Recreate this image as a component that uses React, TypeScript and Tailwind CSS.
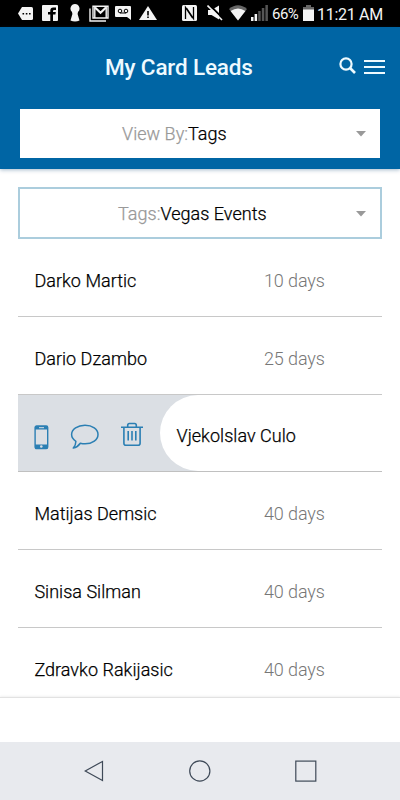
import type { ReactNode } from "react";

type IconProps = { w: number; h: number; className?: string; children: ReactNode };

function Icon({ w, h, className = "", children }: IconProps) {
  return (
    <svg width={w} height={h} viewBox={`0 0 ${w} ${h}`} className={`shrink-0 ${className}`} fill="none">
      {children}
    </svg>
  );
}

function StatusBar() {
  return (
    <div className="flex h-[27px] items-start bg-black pl-[18px] text-[#f4f4f4]">
      <Icon w={15} h={13} className="mt-[7px]">
        <path d="M4 0h9.5Q15 0 15 1.5v10Q15 13 13.5 13H4L0 6.5z" fill="currentColor" />
        <path d="M4.5 6h1.6v1.6H4.5zM7.8 6h1.6v1.6H7.8zM11 6h1.6v1.6H11z" fill="#000" />
      </Icon>
      <Icon w={16} h={16} className="mt-[5px] ml-[9px]">
        <rect width="16" height="16" rx="1" fill="currentColor" />
        <path d="M8.3 16V9.6H6V7h2.3V5.4Q8.3 2.5 11.3 2.5H14V5h-1.8Q11 5 11 6v1h2.8l-.4 2.6H11V16z" fill="#000" />
      </Icon>
      <Icon w={10} h={18} className="mt-[4px] ml-[12px]">
        <path d="M5 0a4.6 4.6 0 0 1 3 8L7.6 10 9.5 16.5Q5 18.5.5 16.5L2.4 10 2 8A4.6 4.6 0 0 1 5 0z" fill="currentColor" />
      </Icon>
      <Icon w={20} h={17} className="mt-[5px] ml-[9px]">
        <path d="M1 3.5V16h16" stroke="currentColor" strokeWidth="1.4" />
        <path d="M4 13V1.2h15V13z" stroke="currentColor" strokeWidth="1.4" />
        <path d="M6 2.5l5.5 5.2L17 2.5" stroke="currentColor" strokeWidth="2.2" />
        <path d="M5.8 2v11M17.2 2v11" stroke="currentColor" strokeWidth="1.4" />
      </Icon>
      <Icon w={16} h={14} className="mt-[6px] ml-[6px]">
        <path d="M1 0h14q1 0 1 1v13l-4-3H1q-1 0-1-1V1q0-1 1-1z" fill="currentColor" />
        <circle cx="5" cy="5" r="1.8" stroke="#000" />
        <circle cx="11" cy="5" r="1.8" stroke="#000" />
        <path d="M5 7h6" stroke="#000" />
      </Icon>
      <Icon w={18} h={14} className="mt-[6px] ml-[8px]">
        <path d="M9 0l9 14H0z" fill="currentColor" />
        <path d="M8.2 5h1.6v4.5H8.2zM8.2 10.5h1.6v1.6H8.2z" fill="#000" />
      </Icon>
      <Icon w={15} h={16} className="mt-[5px] ml-[25px]">
        <rect width="15" height="16" rx="1.5" fill="currentColor" />
        <path d="M3.5 14V2.5l7 10.5M11.5 2v11.5L4.5 3" stroke="#000" strokeWidth="1.3" />
      </Icon>
      <Icon w={16} h={16} className="mt-[5px] ml-[10px]">
        <path d="M1 5h3.5L12 .5v14L4.5 10H1z" fill="currentColor" />
        <path d="M2.5 0l14 14" stroke="#000" strokeWidth="2" />
        <path d="M.5 .5l14.5 14.5" stroke="currentColor" strokeWidth="1.6" />
      </Icon>
      <Icon w={18} h={16} className="mt-[5px] ml-[6px]">
        <path d="M0 4Q9-3.5 18 4L9 15.5z" fill="#666" />
        <path d="M1.6 6Q9 .8 16.4 6L9 15.5z" fill="currentColor" />
      </Icon>
      <Icon w={17} h={16} className="mt-[5px] ml-[4px]">
        <path d="M0 12h2.5v4H0zM3.6 9h2.5v7H3.6z" fill="currentColor" />
        <path d="M7.2 6h2.5v10H7.2zM10.8 3h2.5v13h-2.5zM14.4 0h2.5v16h-2.5z" fill="#555" />
      </Icon>
      <span className="mt-[4px] ml-[4px] w-[31px] text-[15px] leading-[20px] tracking-[-0.5px]">66%</span>
      <Icon w={11} h={16} className="mt-[5px]">
        <path d="M3 0h5v2h3v4H0V2h3z" fill="#666" />
        <path d="M0 4.5h11V16H0z" fill="currentColor" />
      </Icon>
      <span className="mt-[5px] ml-[3px] whitespace-nowrap text-[16px] leading-[20px] tracking-[-0.3px]">11:21 AM</span>
    </div>
  );
}

function Caret() {
  return (
    <Icon w={10} h={6} className="text-[#999]">
      <path d="M0 0h10L5 5.5z" fill="currentColor" />
    </Icon>
  );
}

function Select({ label, value, className }: { label: string; value: string; className: string }) {
  return (
    <div className={`flex items-center bg-white text-[18px] leading-6 font-light tracking-[0.03px] [-webkit-text-stroke:0.25px] ${className}`}>
      <div className="flex-1 whitespace-nowrap">
        <span className="text-[#999]">{label}</span>
        <span className="text-black">{value}</span>
      </div>
      <Caret />
    </div>
  );
}

function Header() {
  return (
    <header className="h-[142px] bg-[#0065a4] px-5 shadow-[0_1px_4px_rgba(0,60,110,0.35)]">
      <div className="flex h-[82px] items-center text-[#eefaff]">
        <h1 className="-mt-[3px] ml-[85px] w-[234px] shrink-0 text-[22.5px] leading-7 font-medium tracking-[-0.15px] whitespace-nowrap">My Card Leads</h1>
        <Icon w={17} h={17} className="-mt-[5px]">
          <circle cx="7" cy="7" r="5.6" stroke="currentColor" strokeWidth="2.2" />
          <path d="M11 11l5 5" stroke="currentColor" strokeWidth="2.6" />
        </Icon>
        <Icon w={21} h={14} className="-mt-[2px] ml-[8px]">
          <path d="M0 1h21M0 7h21M0 13h21" stroke="currentColor" strokeWidth="2" />
        </Icon>
      </div>
      <Select label="View By:" value="Tags" className="h-[49px] pr-[14px] pl-[102px]" />
    </header>
  );
}

function Lead({ name, days }: { name: string; days: string }) {
  return (
    <li className="flex h-[77.8px] items-center border-b border-[#c8c8c8] pt-[7px] pl-[16.4px] text-[18px] leading-6 font-light">
      <span className="w-[229.6px] tracking-[0.03px] text-black [-webkit-text-stroke:0.25px]">{name}</span>
      <span className="tracking-[-0.1px] text-[#777]">{days}</span>
    </li>
  );
}

function SwipedLead({ name }: { name: string }) {
  return (
    <li className="flex h-[77.8px] border-b border-[#c0c0c0] bg-[#dbdfe4] text-[#2b7fb3]">
      <div className="flex w-[142px] shrink-0 items-start pl-[16px]">
        <Icon w={15} h={25} className="mt-[30px]">
          <rect x="1.1" y="1" width="12.6" height="22.6" rx="1.5" stroke="currentColor" strokeWidth="1.4" />
          <path d="M1 1h12.6v3.5H1zM1 19.5h12.6v4H1z" fill="currentColor" />
          <path d="M5 2.7h5" stroke="#dbdfe4" />
          <circle cx="7.3" cy="21.5" r="1.3" fill="#dbdfe4" />
        </Icon>
        <Icon w={29} h={26} className="mt-[29px] ml-[21px]">
          <path d="M15 1.2C22.4 1.2 28 5.1 28 10.4S22.4 19.8 15.2 19.8c-1.8 0-3.4-.2-4.9-.6-1.7 2.4-4 4.2-7 4.8 1.6-1.8 2.6-4 2.6-6.7C3.2 15.6 1.6 13.2 1.6 10.6 1.6 5.3 7.6 1.2 15 1.2z" stroke="currentColor" strokeWidth="1.5" strokeLinejoin="round" />
        </Icon>
        <Icon w={22} h={25} className="mt-[27px] ml-[22px]">
          <path d="M0 5.2h22M6.7 5V3.2q0-1.7 1.7-1.7h5.2q1.7 0 1.7 1.7V5M2.9 5v16.2q0 2 2 2h12.2q2 0 2-2V5M7.2 9v9.5M11 9v9.5M14.8 9v9.5" stroke="currentColor" strokeWidth="1.6" />
        </Icon>
      </div>
      <div className="flex flex-1 items-center rounded-l-[39px] bg-white pt-[7px] pl-[16.5px] text-[18px] leading-6 font-light tracking-[0.03px] text-black [-webkit-text-stroke:0.25px]">{name}</div>
    </li>
  );
}

export default function App() {
  return (
    <div className="flex h-[800px] w-[400px] flex-col overflow-hidden bg-white font-['Roboto',sans-serif]">
      <StatusBar />
      <Header />
      <main className="h-[528px] shrink-0 overflow-hidden px-[18px] pt-[18px]">
        <Select label="Tags:" value="Vegas Events" className="h-[52px] border-2 border-[#abcddd] pt-[2px] pr-[14px] pl-[98px]" />
        <ul>
          <Lead name="Darko Martic" days="10 days" />
          <Lead name="Dario Dzambo" days="25 days" />
          <SwipedLead name="Vjekolslav Culo" />
          <Lead name="Matijas Demsic" days="40 days" />
          <Lead name="Sinisa Silman" days="40 days" />
          <Lead name="Zdravko Rakijasic" days="40 days" />
        </ul>
      </main>
      <div className="h-[45px] shrink-0 border-t border-[#e2e2e2] bg-white shadow-[0_-1px_2px_rgba(0,0,0,0.06)]" />
      <nav className="flex h-[58px] shrink-0 items-start bg-[#e8eaee] pt-[18px] pl-[84px] text-[#3f4a58]">
        <Icon w={20} h={22}>
          <path d="M18.5 1.4v19.2L1.2 11z" stroke="currentColor" strokeWidth="1.2" />
        </Icon>
        <Icon w={22} h={22} className="ml-[85px]">
          <circle cx="10.8" cy="11" r="10.1" stroke="currentColor" strokeWidth="1.2" />
        </Icon>
        <Icon w={22} h={22} className="ml-[84px]">
          <rect x=".8" y="1.1" width="20" height="20" stroke="currentColor" strokeWidth="1.2" />
        </Icon>
      </nav>
    </div>
  );
}
